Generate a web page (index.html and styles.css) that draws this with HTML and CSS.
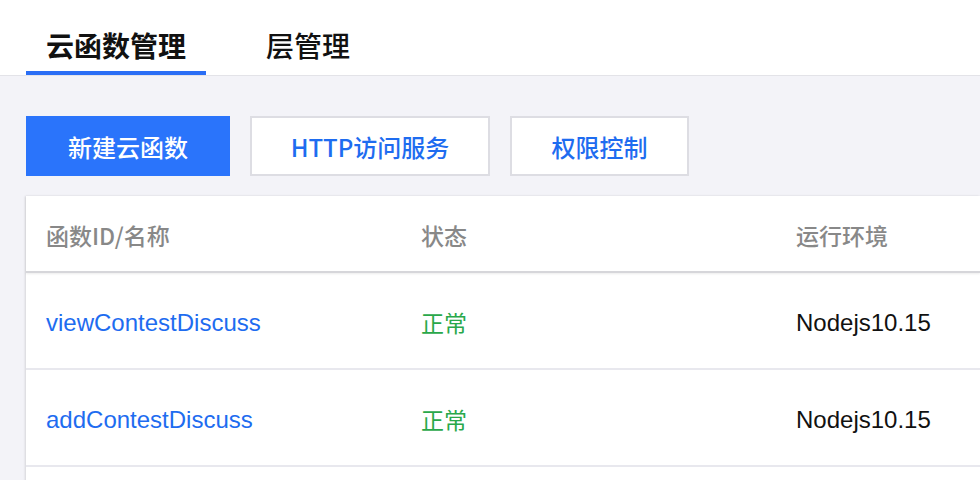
FILE: index.html
```html
<!DOCTYPE html>
<html lang="zh">
<head>
<meta charset="utf-8">
<link rel="stylesheet" href="styles.css">
</head>
<body>
<div class="page">
  <nav class="tabs">
    <div class="tab active">云函数管理</div>
    <div class="tab">层管理</div>
  </nav>
  <main class="content">
    <div class="toolbar">
      <button class="btn primary">新建云函数</button>
      <button class="btn">HTTP访问服务</button>
      <button class="btn narrow">权限控制</button>
    </div>
    <div class="table">
      <div class="row head">
        <div class="cell c1">函数ID/名称</div>
        <div class="cell c2">状态</div>
        <div class="cell c3">运行环境</div>
      </div>
      <div class="row">
        <div class="cell c1 link">viewContestDiscuss</div>
        <div class="cell c2 ok">正常</div>
        <div class="cell c3 env">Nodejs10.15</div>
      </div>
      <div class="row">
        <div class="cell c1 link">addContestDiscuss</div>
        <div class="cell c2 ok">正常</div>
        <div class="cell c3 env">Nodejs10.15</div>
      </div>
      <div class="row"></div>
    </div>
  </main>
</div>
</body>
</html>
```
FILE: styles.css
```css
* { box-sizing: border-box; }
html, body { margin: 0; padding: 0; }
body {
  width: 980px;
  height: 480px;
  overflow: hidden;
  background: #f3f3f8;
  font-family: "Noto Sans CJK SC", "Liberation Sans", sans-serif;
}
.page { display: flex; flex-direction: column; }
.tabs {
  background: #fff;
  height: 76px;
  display: flex;
  padding-left: 26px;
  border-bottom: 1px solid #e3e3e8;
}
.tab {
  width: 180px;
  display: flex;
  justify-content: center;
  align-items: center;
  padding-top: 18px;
  font-size: 28px;
  font-weight: 500;
  color: #111;
  height: 100%;
  border-bottom: 4px solid transparent;
  margin-bottom: -1px;
}
.tab + .tab { width: 204px; }
.tab.active { font-weight: 700; border-bottom-color: #2a6ef5; }
.content { padding: 40px 0 0 26px; }
.toolbar { display: flex; gap: 20px; }
.btn {
  height: 60px;
  width: 240px;
  font-family: inherit;
  font-size: 24px;
  font-weight: 500;
  color: #1e6cf0;
  background: #fff;
  border: 2px solid #dddde3;
  padding: 0;
}
.btn.primary {
  width: 204px;
  background: #2a74fb;
  color: #fff;
  border-color: #2a74fb;
}
.btn.narrow { width: 179px; }
.table {
  margin-top: 20px;
  background: #fff;
  box-shadow: -1px 0 2px rgba(0,0,0,0.12);
}
.row {
  display: flex;
  align-items: center;
  height: 97px;
  border-bottom: 2px solid #e8e8ee;
  font-size: 23px;
  color: #111;
}
.row.head {
  height: 77px;
  color: #888;
  font-weight: 500;
  border-bottom: 2px solid #d6d6da;
  box-shadow: 0 1px 2px rgba(0,0,0,0.08);
}
.cell { padding-left: 20px; padding-top: 2px; }
.c1 { width: 375px; }
.c2 { width: 375px; }
.c3 { flex: 1; }
.link { color: #1e6cf0; font-family: "Liberation Sans", sans-serif; font-size: 24px; padding-top: 4px; }
.env { font-family: "Liberation Sans", sans-serif; font-size: 24px; padding-top: 4px; }
.ok { color: #29a84a; }
```
